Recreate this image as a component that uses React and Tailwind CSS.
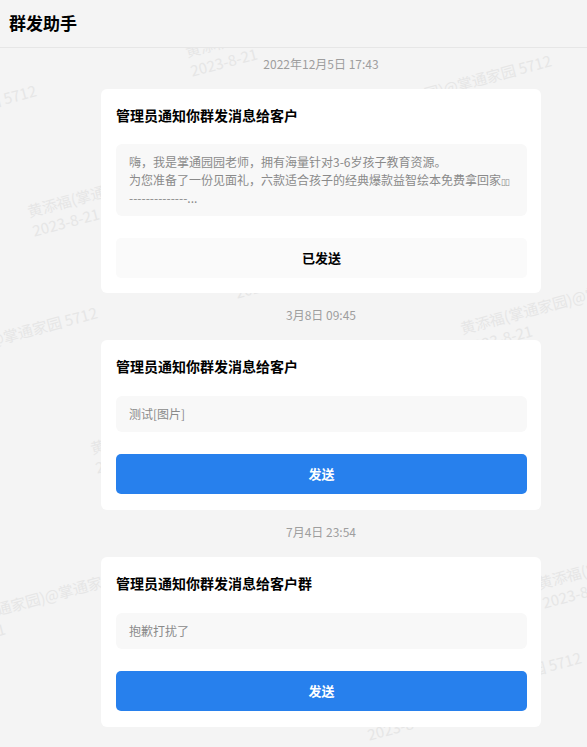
import React from 'react';

const messages = [
    {
        time: '2022年12月5日 17:43',
        title: '管理员通知你群发消息给客户',
        lines: [
            '嗨，我是掌通园园老师，拥有海量针对3-6岁孩子教育资源。',
            '为您准备了一份见面礼，六款适合孩子的经典爆款益智绘本免费拿回家',
            '--------------...',
        ],
        sent: true,
    },
    {
        time: '3月8日 09:45',
        title: '管理员通知你群发消息给客户',
        lines: ['测试[图片]'],
        sent: false,
    },
    {
        time: '7月4日 23:54',
        title: '管理员通知你群发消息给客户群',
        lines: ['抱歉打扰了'],
        sent: false,
    },
];

// 水印位置 (left, top)
const marks = [
    [183, 42], [330, 109], [-185, 139], [25, 202], [228, 264],
    [-124, 361], [458, 319], [88, 439], [-69, 617], [535, 574], [360, 706],
];

function Watermark({ x, y }) {
    return (
        <div
            className="absolute origin-top-left -rotate-[15deg] whitespace-nowrap text-[15px] leading-[20px] text-[#e6e6e6]"
            style={{ left: x, top: y }}
        >
            <div>黄添福(掌通家园)@掌通家园 5712</div>
            <div>2023-8-21</div>
        </div>
    );
}

function MessageCard({ msg, first }) {
    return (
        <div className={first ? '' : 'mt-[6px]'}>
            <div className="pt-[6px] pb-[15px] text-center text-[12px] leading-[20px] text-[#9e9e9e]">
                {msg.time}
            </div>
            <div className={`bg-white rounded-[6px] pt-4 pl-[15px] pr-[14px] ${msg.sent ? 'pb-[15px]' : 'pb-4'}`}>
                <div className="text-[14px] font-bold leading-[20px] text-black">{msg.title}</div>
                <div className={`rounded-[6px] bg-[#f8f8f8] px-[13px] py-[9px] text-[12px] leading-[18px] text-[#8a8a8a] ${msg.sent ? 'mt-[19px]' : 'mt-5'}`}>
                    {msg.lines.map((line, i) => (
                        <div key={i} className="whitespace-nowrap h-[18px]">
                            {line}
                            {msg.sent && i === 1 && <span className="text-[9px] leading-none tracking-[-1px]">▯▯</span>}
                        </div>
                    ))}
                </div>
                {msg.sent ? (
                    <div className="mt-[22px] h-10 rounded-[5px] bg-[#fafafa] flex items-center justify-center text-[13px] font-bold text-black">
                        已发送
                    </div>
                ) : (
                    <button className="mt-[22px] w-full h-10 rounded-[5px] bg-[#2780ed] flex items-center justify-center text-[13px] font-bold text-white">
                        发送
                    </button>
                )}
            </div>
        </div>
    );
}

export default function App() {
    return (
        <div className="relative min-h-screen overflow-hidden bg-[#f4f4f4] font-['Noto_Sans_CJK_SC',sans-serif]">
            <div className="absolute inset-0 pointer-events-none">
                {marks.map(([x, y], i) => (
                    <Watermark key={i} x={x} y={y} />
                ))}
            </div>

            <div className="relative z-10 h-[48px] border-b border-[#e6e6e6] bg-[#f4f4f4] flex items-center pl-[9px] pb-[2px]">
                <h1 className="text-[17px] font-bold text-black">群发助手</h1>
            </div>

            <div className="relative z-10 ml-[101px] w-[440px] pb-8">
                {messages.map((msg, i) => (
                    <MessageCard key={i} msg={msg} first={i === 0} />
                ))}
            </div>
        </div>
    );
}
